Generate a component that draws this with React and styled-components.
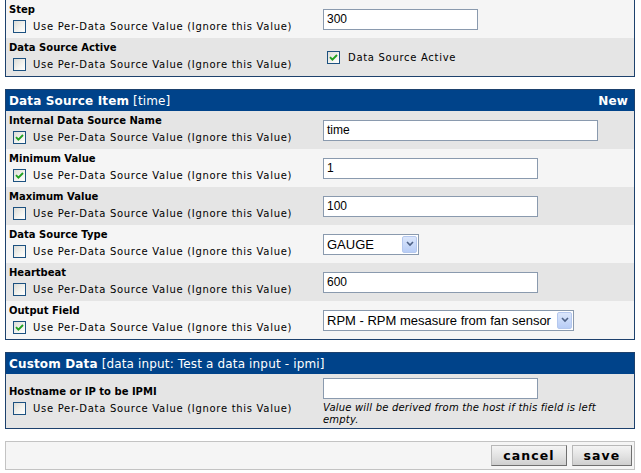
import React from 'react'
import styled, { createGlobalStyle } from 'styled-components'

const GlobalStyle = createGlobalStyle`
  html, body {
    margin: 0;
    padding: 0;
    background: #ffffff;
  }
  body {
    font-family: "DejaVu Sans", Verdana, sans-serif;
    font-size: 10px;
    color: #000;
  }
`

const Page = styled.div`
  padding: 0 6px 0 5px;
  display: flex;
  flex-direction: column;
  gap: 12px;
`

const Section = styled.div`
  border: 1px solid #1d416d;
  border-top: ${(p) => (p.$open ? 'none' : '1px solid #1d416d')};
  display: flex;
  flex-direction: column;
`

const Header = styled.div`
  background: #00438a;
  color: #fff;
  height: 21px;
  padding: 0 6px 0 3px;
  display: flex;
  align-items: center;
  justify-content: space-between;
  font-size: 12px;
  letter-spacing: 0.15px;
`

const HeaderTitle = styled.div`
  white-space: nowrap;
  b {
    font-weight: bold;
  }
`

const HeaderTag = styled.b`
  font-weight: bold;
`

const Row = styled.div`
  display: grid;
  grid-template-columns: 317px 1fr;
  background: ${(p) => (p.$dark ? '#e5e5e5' : '#f5f5f5')};
  min-height: ${(p) => p.$height || 38}px;
`

const LabelCell = styled.div`
  padding: 3px 3px;
  display: flex;
  flex-direction: column;
  justify-content: center;
`

const Label = styled.div`
  font-weight: bold;
  font-size: 10px;
  line-height: 14px;
`

const CheckLine = styled.label`
  display: flex;
  align-items: center;
  height: 18px;
  padding-left: ${(p) => p.$indent ?? 4}px;
  gap: ${(p) => p.$gap ?? 7}px;
  font-size: 10px;
  letter-spacing: 0.7px;
  white-space: nowrap;
`

const ValueCell = styled.div`
  display: flex;
  flex-direction: column;
  justify-content: ${(p) => (p.$top ? 'flex-start' : 'center')};
  align-items: flex-start;
  padding: ${(p) => (p.$top ? '4px 0 0' : '0')};
`

const TextInput = styled.div`
  box-sizing: border-box;
  width: ${(p) => p.$w}px;
  height: 21px;
  border: 1px solid #8a9aae;
  background: #fff;
  font-family: "Liberation Sans", Arial, sans-serif;
  font-size: 12px;
  line-height: 19px;
  padding-left: 3px;
`

const SelectBox = styled.div`
  box-sizing: border-box;
  width: ${(p) => p.$w}px;
  height: 21px;
  border: 1px solid #8a9aae;
  background: #fff;
  display: flex;
  align-items: stretch;
  font-family: "Liberation Sans", Arial, sans-serif;
  font-size: 13px;
`

const SelectText = styled.div`
  flex: 1;
  padding-left: 3px;
  line-height: 19px;
  white-space: nowrap;
  overflow: hidden;
`

const SelectButton = styled.div`
  width: 15px;
  margin: 1px;
  border-radius: 2px;
  background: linear-gradient(180deg, #dbe6fb 0%, #b8cdf6 100%);
  border: 1px solid #b5c8ee;
  box-sizing: border-box;
  display: flex;
  align-items: center;
  justify-content: center;
`

const Help = styled.div`
  font-style: italic;
  font-size: 10px;
  line-height: 12px;
  width: 300px;
  margin-top: 3px;
  letter-spacing: 0.2px;
`

const Box = styled.span`
  box-sizing: border-box;
  width: 13px;
  height: 13px;
  border: 1px solid #1c5180;
  background: linear-gradient(135deg, #dcdcd7 0%, #f4f4f0 60%, #ffffff 100%);
  display: inline-flex;
  align-items: center;
  justify-content: center;
  flex: none;
`

const ButtonBar = styled.div`
  border: 1px solid #c3c3c3;
  background: #f5f5f5;
  height: 27px;
  display: flex;
  justify-content: flex-end;
  align-items: center;
  gap: 5px;
  padding-right: 2px;
`

const Button = styled.button`
  height: 21px;
  width: ${(p) => p.$w}px;
  border: 1px solid #6f6f6f;
  border-top-color: #b8b8b8;
  border-left-color: #b8b8b8;
  background: linear-gradient(180deg, #f4f4f4 0%, #e3e3e3 50%, #cfcfcf 100%);
  font-family: "DejaVu Sans", Verdana, sans-serif;
  font-weight: bold;
  font-size: 12.5px;
  letter-spacing: 1.1px;
  padding: 0;
  color: #000;
`

function Checkbox({ checked }) {
  return (
    <Box>
      {checked && (
        <svg width="9" height="9" viewBox="0 0 9 9">
          <path d="M1 4.2 L3.4 6.6 L8 2" fill="none" stroke="#21a121" strokeWidth="1.9" />
        </svg>
      )}
    </Box>
  )
}

function Chevron() {
  return (
    <svg width="8" height="6" viewBox="0 0 8 6">
      <path d="M1 1 L4 4 L7 1" fill="none" stroke="#4d6185" strokeWidth="1.6" />
    </svg>
  )
}

const USE = 'Use Per-Data Source Value (Ignore this Value)'

function Field({ label, checked, dark, children, top, height }) {
  return (
    <Row $dark={dark} $height={height}>
      <LabelCell>
        <Label>{label}</Label>
        <CheckLine>
          <Checkbox checked={checked} />
          {USE}
        </CheckLine>
      </LabelCell>
      <ValueCell $top={top}>{children}</ValueCell>
    </Row>
  )
}

export default function App() {
  return (
    <>
      <GlobalStyle />
      <Page>
        <Section $open>
          <Field label="Step">
            <TextInput $w={155}>300</TextInput>
          </Field>
          <Field label="Data Source Active" dark>
            <CheckLine $indent={4} $gap={8}>
              <Checkbox checked />
              Data Source Active
            </CheckLine>
          </Field>
        </Section>

        <Section>
          <Header>
            <HeaderTitle>
              <b>Data Source Item</b> [time]
            </HeaderTitle>
            <HeaderTag>New</HeaderTag>
          </Header>
          <Field label="Internal Data Source Name" checked dark>
            <TextInput $w={275}>time</TextInput>
          </Field>
          <Field label="Minimum Value" checked>
            <TextInput $w={215}>1</TextInput>
          </Field>
          <Field label="Maximum Value" dark>
            <TextInput $w={215}>100</TextInput>
          </Field>
          <Field label="Data Source Type">
            <SelectBox $w={96}>
              <SelectText>GAUGE</SelectText>
              <SelectButton>
                <Chevron />
              </SelectButton>
            </SelectBox>
          </Field>
          <Field label="Heartbeat" dark>
            <TextInput $w={215}>600</TextInput>
          </Field>
          <Field label="Output Field" checked>
            <SelectBox $w={251}>
              <SelectText>RPM - RPM mesasure from fan sensor</SelectText>
              <SelectButton>
                <Chevron />
              </SelectButton>
            </SelectBox>
          </Field>
        </Section>

        <Section>
          <Header>
            <HeaderTitle>
              <b>Custom Data</b> [data input: Test a data input - ipmi]
            </HeaderTitle>
          </Header>
          <Field label="Hostname or IP to be IPMI" dark top height={54}>
            <TextInput $w={215}></TextInput>
            <Help>Value will be derived from the host if this field is left empty.</Help>
          </Field>
        </Section>

        <ButtonBar>
          <Button $w={76}>cancel</Button>
          <Button $w={60}>save</Button>
        </ButtonBar>
      </Page>
    </>
  )
}
